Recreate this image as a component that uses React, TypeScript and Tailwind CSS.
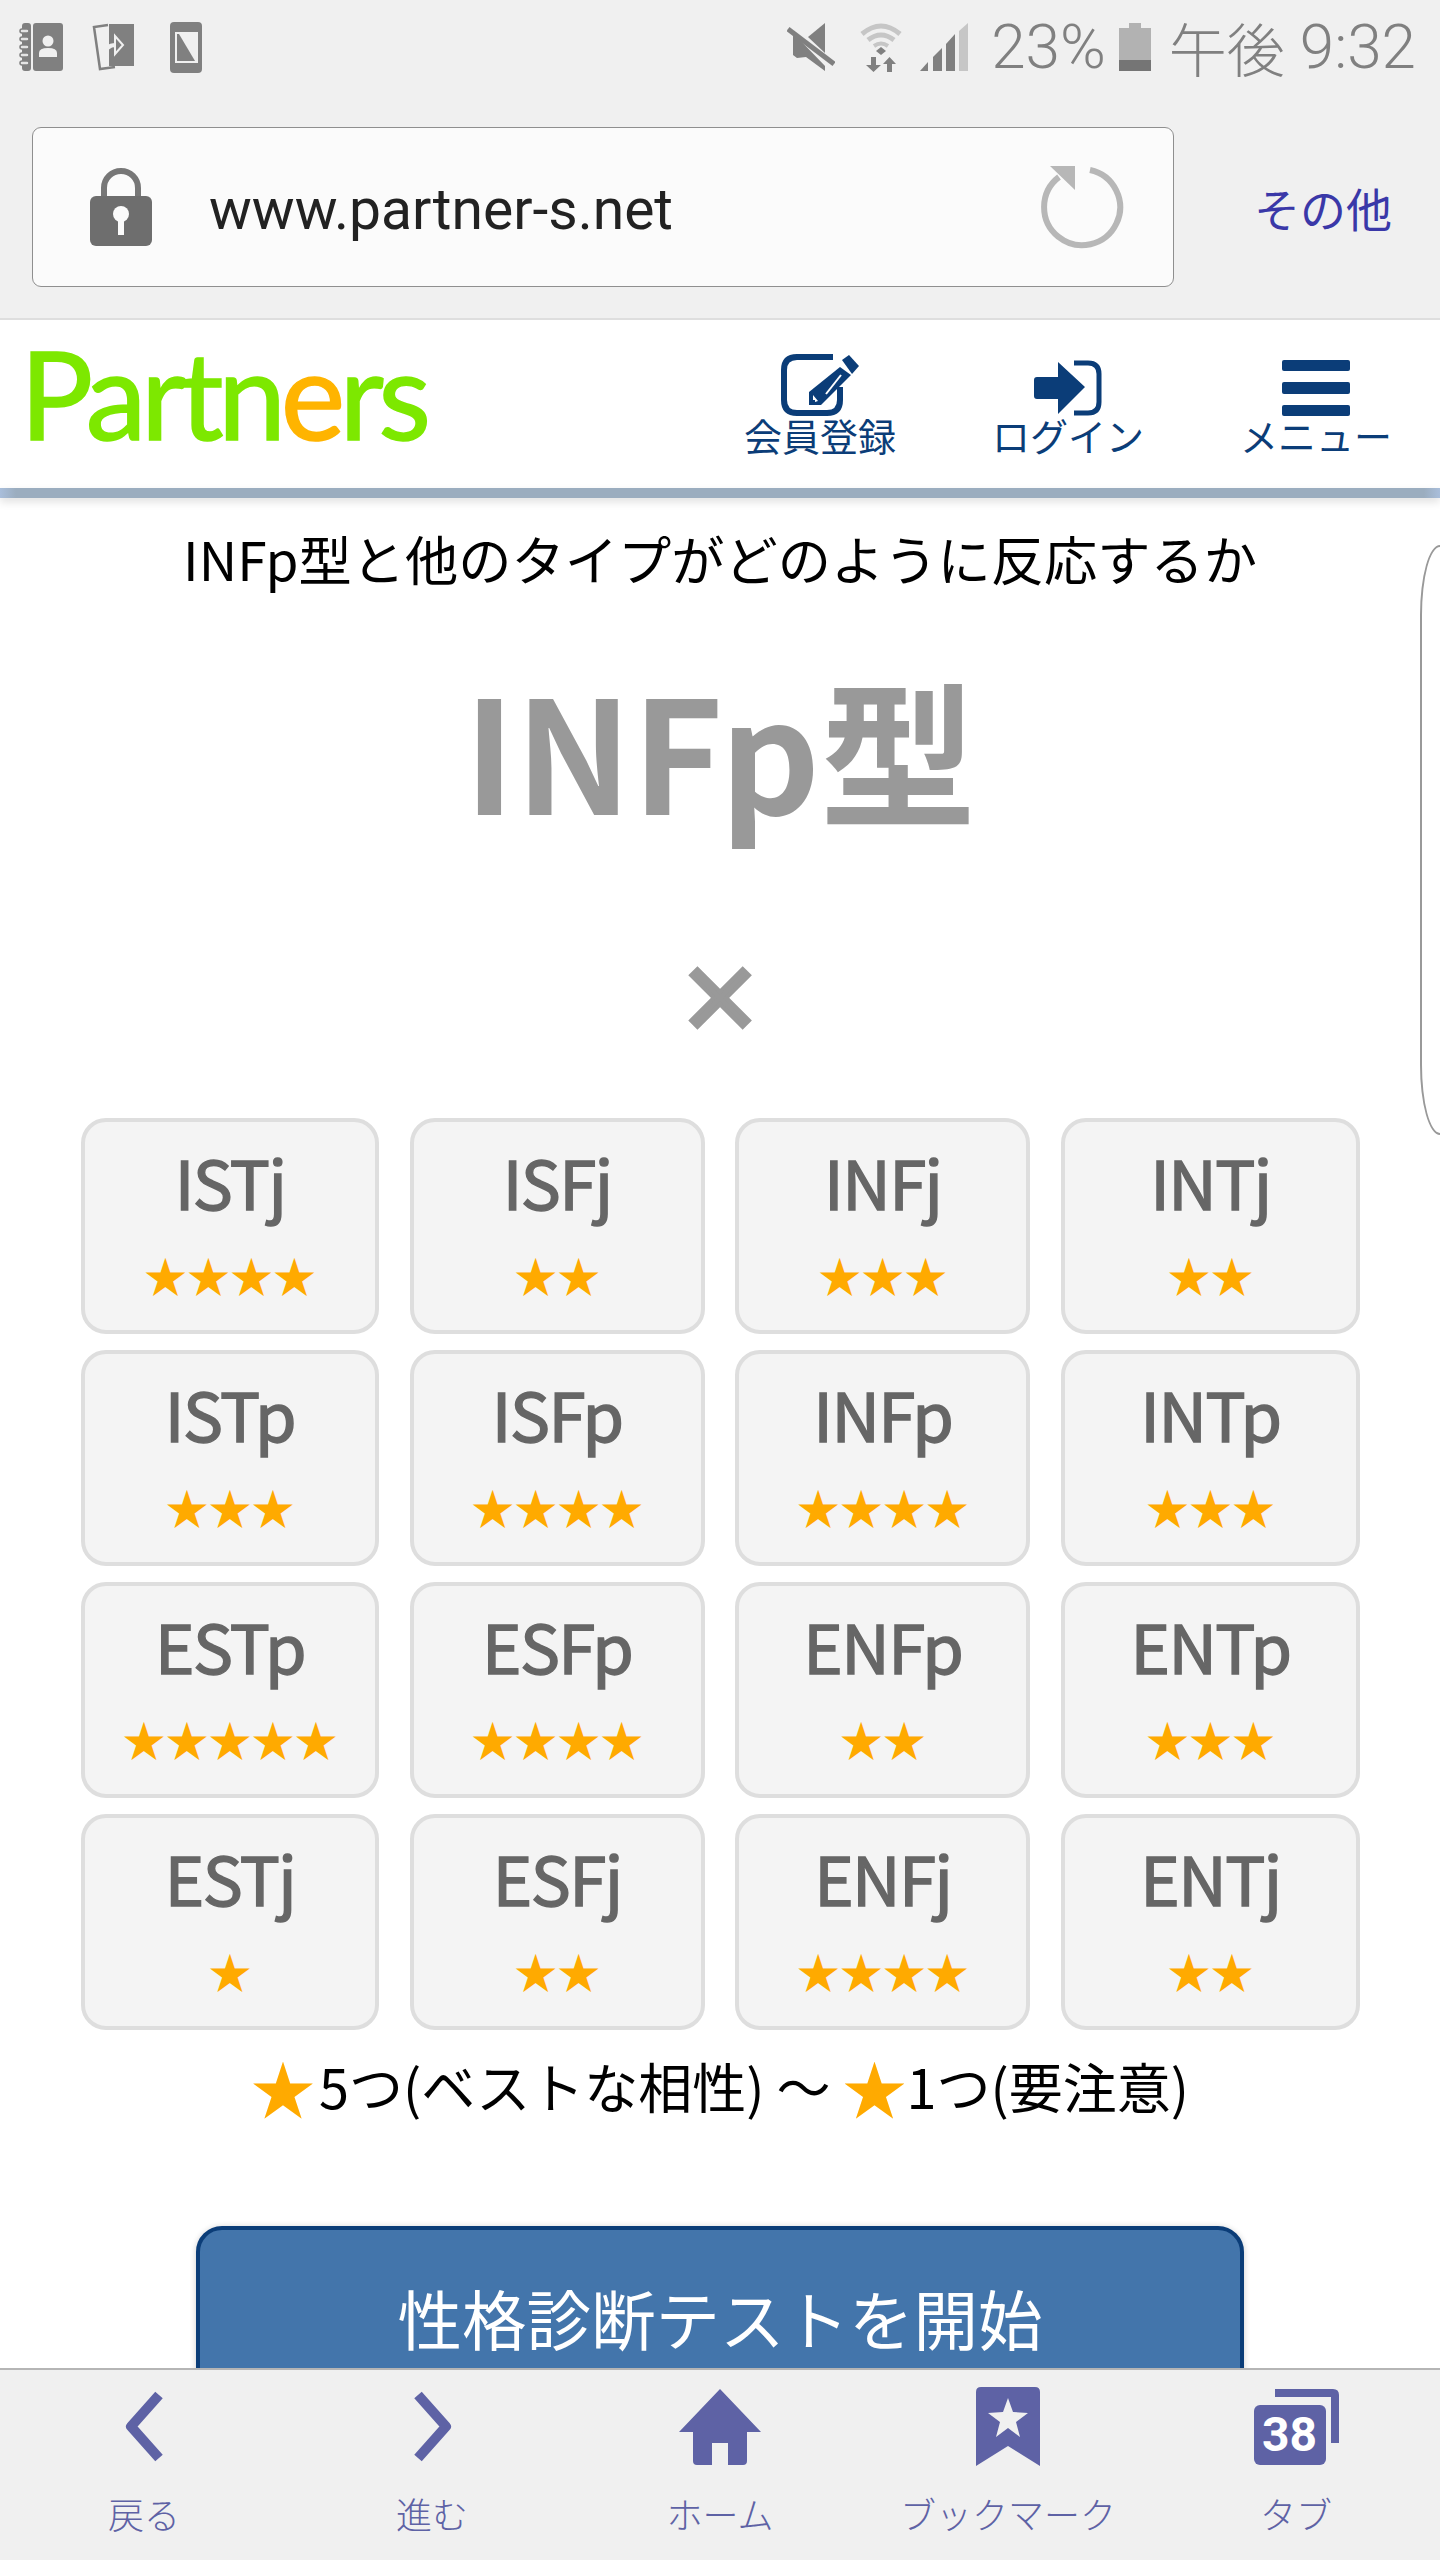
const TYPES: [string, number][] = [
  ['ISTj', 4], ['ISFj', 2], ['INFj', 3], ['INTj', 2],
  ['ISTp', 3], ['ISFp', 4], ['INFp', 4], ['INTp', 3],
  ['ESTp', 5], ['ESFp', 4], ['ENFp', 2], ['ENTp', 3],
  ['ESTj', 1], ['ESFj', 2], ['ENFj', 4], ['ENTj', 2],
];

function ContactsIcon() {
  return (
    <svg width="44" height="48" viewBox="0 0 44 48" fill="#808080">
      <rect x="3" y="0" width="9" height="48" rx="3" />
      <rect x="14" y="0" width="30" height="48" rx="3" />
      {[6, 14, 22, 30, 38].map((y) => (
        <rect key={y} x="1" y={y} width="9" height="4" rx="2" fill="#e4e4e4" stroke="#808080" strokeWidth="1.5" />
      ))}
      <circle cx="29" cy="18" r="5.5" fill="#f0f0f0" />
      <path d="M20 34v-4q0-5 9-5t9 5v4z" fill="#f0f0f0" />
    </svg>
  );
}

function RotateIcon() {
  return (
    <svg width="43" height="48" viewBox="0 0 43 48">
      <rect x="18" y="1" width="25" height="42" fill="#808080" />
      <path d="M17 2 3 4l6 42 15-2" fill="none" stroke="#808080" strokeWidth="2.5" />
      <path d="M14 33q0-11 11-11" fill="none" stroke="#f0f0f0" strokeWidth="4" />
      <path d="M24 13l8 9-8 9z" fill="#808080" stroke="#f0f0f0" strokeWidth="2" />
    </svg>
  );
}

function PhoneIcon() {
  return (
    <svg width="32" height="51" viewBox="0 0 32 51">
      <rect width="32" height="51" rx="4" fill="#808080" />
      <rect x="5" y="10" width="23" height="31" fill="#f0f0f0" />
      <path d="M7 12h2l16 27H7z" fill="#808080" />
    </svg>
  );
}

function MuteIcon() {
  return (
    <svg width="48" height="48" viewBox="0 0 48 48" fill="#808080">
      <path d="M6 13v19l4 3 9-1 19 14v-5L8 12z" />
      <path d="M21 14 38 0v30z" />
      <path d="M1 6 47 41" stroke="#808080" strokeWidth="5" />
    </svg>
  );
}

function WifiIcon() {
  return (
    <svg width="42" height="49" viewBox="0 0 42 49" fill="none">
      <path d="M2 11Q21-5 40 11" stroke="#c6c6c6" strokeWidth="5" />
      <path d="M8 17q13-10 26 0" stroke="#c6c6c6" strokeWidth="5" />
      <path d="M14 23q7-5 14 0" stroke="#c6c6c6" strokeWidth="4" />
      <path d="M21 24l5 4-5 4-5-4z" fill="#808080" />
      <path d="M11 34h5v8h5l-7.500 7L6 42h5zM27 49v-8h-4l6.500-7 6.500 7h-4v8z" fill="#808080" />
    </svg>
  );
}

function SignalIcon() {
  return (
    <svg width="49" height="48" viewBox="0 0 49 48" fill="#808080">
      <path d="M0 48l8-9v9z" />
      <path d="M13 48V34l9-9v23z" />
      <path d="M26 48V21l9-10v37z" />
      <path d="M39 48V8l9-8v48z" fill="#c6c6c6" />
    </svg>
  );
}

function BatteryIcon() {
  return (
    <svg width="32" height="48" viewBox="0 0 32 48">
      <path d="M10 0h12v5h10v43H0V5h10z" fill="#b2b2b2" />
      <rect y="37" width="32" height="11" fill="#757575" />
    </svg>
  );
}

function LockIcon() {
  return (
    <svg width="62" height="78" viewBox="0 0 62 78">
      <path d="M14 32V20a17 17 0 0 1 34 0v12" fill="none" stroke="#777" strokeWidth="6" />
      <rect y="28" width="62" height="50" rx="6" fill="#6e6e6e" />
      <circle cx="31" cy="46" r="8" fill="#fbfbfb" />
      <rect x="28" y="48" width="6" height="19" fill="#fbfbfb" />
    </svg>
  );
}

function ReloadIcon() {
  return (
    <svg width="84" height="84" viewBox="0 0 84 84">
      <path d="M50 5A38 38 0 1 1 19 12" fill="none" stroke="#b7b7b7" strokeWidth="6" />
      <path d="M10 1h25v24z" fill="#b7b7b7" />
    </svg>
  );
}

function EditIcon() {
  return (
    <svg width="78" height="62" viewBox="0 0 78 62" fill="#0b3d78">
      <path d="M52 3H16Q3 3 3 16v30q0 13 13 13h30q13 0 13-13V33" fill="none" stroke="#0b3d78" strokeWidth="6" />
      <path d="M61 6l7-5 10 11-7 8z" />
      <path d="M59 13l11 8-30 30H28V38z" />
      <path d="M60 21 45 40" stroke="#fff" strokeWidth="2" />
      <path d="M32 41l5 6-3 1v-2h-2z" fill="#fff" />
    </svg>
  );
}

function LoginIcon() {
  return (
    <svg width="68" height="56" viewBox="0 0 68 56" fill="#0b3d78">
      <path d="M24 2 51 27 24 54V39H3q-3 0-3-3V20q0-3 3-3h21z" />
      <path d="M40 3h14q11 0 11 11v28q0 11-11 11H40" fill="none" stroke="#0b3d78" strokeWidth="5" />
    </svg>
  );
}

function MenuIcon() {
  return (
    <svg width="68" height="56" viewBox="0 0 68 56" fill="#0b3d78">
      <rect width="68" height="11" rx="2" />
      <rect y="22" width="68" height="12" rx="2" />
      <rect y="45" width="68" height="11" rx="2" />
    </svg>
  );
}

function BackIcon() {
  return (
    <svg width="39" height="71" viewBox="0 0 39 71" fill="none">
      <path d="M34 4 6 35.500 34 67" stroke="#5e62a5" strokeWidth="10" strokeLinejoin="round" />
    </svg>
  );
}

function ForwardIcon() {
  return (
    <svg width="39" height="71" viewBox="0 0 39 71" fill="none">
      <path d="M5 4l28 31.500L5 67" stroke="#5e62a5" strokeWidth="10" strokeLinejoin="round" />
    </svg>
  );
}

function HomeIcon() {
  return (
    <svg width="82" height="76" viewBox="0 0 82 76" fill="#5e62a5">
      <path d="M41 0l41 43H68v29q0 4-4 4H49V54H33v22H18q-4 0-4-4V43H0z" />
    </svg>
  );
}

function BookmarkIcon() {
  return (
    <svg width="64" height="79" viewBox="0 0 64 79">
      <path d="M5 0h54q5 0 5 5v74L32 59 0 79V5q0-5 5-5z" fill="#5e62a5" />
      <path d="M32 11l5 14 15 1-12 9 4 15-12-9-12 9 4-15-12-9 15-1z" fill="#f0f0f0" />
    </svg>
  );
}

function TabsIcon() {
  return (
    <div className="relative w-[85px] h-[76px]">
      <svg className="absolute right-0 top-0" width="64" height="54" viewBox="0 0 64 54" fill="#5e62a5">
        <path d="M0 0h58q6 0 6 6v48h-8V8H0z" />
      </svg>
      <div className="absolute left-0 bottom-0 w-[72px] h-[60px] rounded-[6px] bg-[#5e62a5] flex items-center justify-center font-['Roboto',sans-serif] font-bold text-[48px] leading-none text-white">
        38
      </div>
    </div>
  );
}

function HeaderLink({ icon, label }: { icon: React.ReactNode; label: string }) {
  return (
    <div className="w-[248px] flex flex-col items-center">
      <div className="h-[62px] flex items-end">{icon}</div>
      <span className="-mt-[3px] text-[38px] leading-[44px] text-[#0b3d78] whitespace-nowrap">{label}</span>
    </div>
  );
}

function TypeCard({ name, stars }: { name: string; stars: number }) {
  return (
    <div className="h-[216px] rounded-[25px] border-[4px] border-[#dedede] bg-[#f4f4f4] flex flex-col items-center pt-[14px]">
      <span className="text-[67px] leading-[90px] tracking-[-1.5px] [-webkit-text-stroke:1.5px_#666] text-[#666]">{name}</span>
      <span className="mt-[18px] text-[43px] leading-[60px] text-[#ffaa00] whitespace-nowrap">{'★'.repeat(stars)}</span>
    </div>
  );
}

function NavItem({ icon, label }: { icon: React.ReactNode; label: string }) {
  return (
    <div className="flex flex-col items-center">
      <div className="h-[79px] flex items-center justify-center">{icon}</div>
      <span className="mt-[27px] text-[36px] leading-[40px] font-light text-[#5e62a5] whitespace-nowrap">{label}</span>
    </div>
  );
}

export default function App() {
  return (
    <div className="relative w-[1440px] h-[2560px] flex flex-col overflow-hidden bg-white font-['Noto_Sans_CJK_JP','Noto_Sans',sans-serif]">
      {/* system bar and address bar */}
      <div className="h-[320px] shrink-0 bg-[#f0f0f0] border-b-2 border-[#dedede]">
        <div className="pt-[21px] h-[73px] pl-[19px] pr-[24px] flex items-center justify-between text-[#808080]">
          <div className="flex items-center">
            <ContactsIcon />
            <span className="w-[28px]" />
            <RotateIcon />
            <span className="w-[36px]" />
            <PhoneIcon />
          </div>
          <div className="flex items-center">
            <MuteIcon />
            <span className="w-[25px]" />
            <WifiIcon />
            <span className="w-[18px]" />
            <SignalIcon />
            <span className="ml-[22px] font-['Roboto',sans-serif] font-light text-[62px] leading-none">23%</span>
            <span className="w-[13px]" />
            <BatteryIcon />
            <span className="ml-[18px] text-[58px] leading-none font-light whitespace-nowrap">午後</span>
            <span className="ml-[15px] font-['Roboto',sans-serif] font-light text-[62px] leading-none">9:32</span>
          </div>
        </div>
        <div className="mt-[54px] ml-[32px] flex items-center">
          <div className="w-[1142px] h-[160px] rounded-[9px] border-[1.5px] border-[#8f8f8f] bg-[#fbfbfb] flex items-center pl-[57px] pr-[49px]">
            <LockIcon />
            <span className="ml-[57px] pt-[5px] font-['Roboto',sans-serif] text-[57px] leading-none text-[#222] whitespace-nowrap">www.partner-s.net</span>
            <span className="ml-auto">
              <ReloadIcon />
            </span>
          </div>
          <span className="ml-[80px] text-[46px] leading-none text-[#3a38a8] whitespace-nowrap">その他</span>
        </div>
      </div>

      {/* site header */}
      <div className="h-[168px] shrink-0 bg-white flex items-start justify-between">
        <div className="mt-[3px] ml-[20px] font-['Lato',sans-serif] text-[122px] leading-[140px] tracking-[-5.500px] [-webkit-text-stroke:1.5px_currentColor] text-[#7de800]">
          Partn<span className="text-[#ffb400]">e</span>rs
        </div>
        <div className="flex pt-[34px]">
          <HeaderLink icon={<EditIcon />} label="会員登録" />
          <HeaderLink icon={<LoginIcon />} label="ログイン" />
          <HeaderLink icon={<MenuIcon />} label="メニュー" />
        </div>
      </div>
      <div className="h-[10px] shrink-0 bg-[linear-gradient(to_right,#a9bedb,#9badbf_16px,#9badbf_calc(100%-16px),#a9bedb)] shadow-[0_4px_8px_rgba(0,0,0,0.12)] z-10" />

      <div className="relative flex-1 overflow-hidden">
        {/* edge of the side panel handle */}
        <div className="absolute top-[47px] -right-[60px] w-[80px] h-[590px] rounded-tl-[20px_70px] rounded-bl-[20px_70px] border-2 border-[#999]" />

        <p className="mt-[27px] text-center text-[53.250px] leading-[66px] text-black">INFp型と他のタイプがどのように反応するか</p>
        <p className="mt-[66px] text-center text-[156px] leading-[180px] font-bold text-[#999]">INFp型</p>
        <p className="mt-[91px] text-center text-[88px] leading-[130px] font-bold [-webkit-text-stroke:4px_#999] text-[#999]">×</p>

        <div className="mt-[60px] ml-[81px] w-[1279px] grid grid-cols-[298px_295px_295px_299px] justify-between gap-y-[16px]">
          {TYPES.map(([name, stars]) => (
            <TypeCard key={name} name={name} stars={stars} />
          ))}
        </div>

        <p className="mt-[21px] flex items-center justify-center text-[54px] leading-[70px] text-black whitespace-nowrap">
          <span className="text-[64px] text-[#ffaa00] mr-[4px]">★</span>
          5つ(ベストな相性) ～<span className="ml-[12px] text-[64px] text-[#ffaa00]">★</span>1つ(要注意)
        </p>

        <div className="mt-[105px] mx-auto w-[1048px] h-[220px] rounded-[26px] border-[4px] border-[#0b3d78] bg-[#4375ab] pt-[47px] text-center text-[64.500px] leading-[80px] text-white shadow-[0_1px_6px_rgba(0,0,0,0.2)]">
          性格診断テストを開始
        </div>
      </div>

      {/* browser toolbar */}
      <div className="h-[192px] shrink-0 z-10 bg-[#f0f0f0] border-t-2 border-[#b5b5b5] pt-[17px] grid grid-cols-5">
        <NavItem icon={<BackIcon />} label="戻る" />
        <NavItem icon={<ForwardIcon />} label="進む" />
        <NavItem icon={<HomeIcon />} label="ホーム" />
        <NavItem icon={<BookmarkIcon />} label="ブックマーク" />
        <NavItem icon={<TabsIcon />} label="タブ" />
      </div>
    </div>
  );
}
